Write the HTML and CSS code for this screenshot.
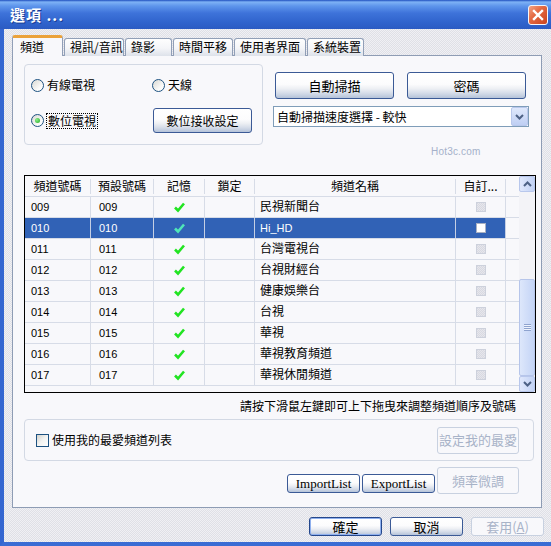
FILE: index.html
```html
<!DOCTYPE html>
<html lang="zh-Hant">
<head>
<meta charset="utf-8">
<title>選項</title>
<link rel="stylesheet" href="styles.css">
</head>
<body>
<div class="window">
  <div class="titlebar">
    <span class="title">選項 ...</span>
    <span class="close"><svg width="12" height="12" viewBox="0 0 12 12"><path d="M2 2 L10 10 M10 2 L2 10" stroke="#fff" stroke-width="2.4" stroke-linecap="square"/></svg></span>
  </div>
  <div class="frame">
    <div class="tabs">
      <div class="tab sel tw1">頻道</div>
      <div class="tab tw2">視訊/音訊</div>
      <div class="tab tw3">錄影</div>
      <div class="tab tw4">時間平移</div>
      <div class="tab tw5">使用者界面</div>
      <div class="tab tw6">系統裝置</div>
    </div>
    <div class="panel">
      <div class="top">
        <div class="group1">
          <div class="opt"><span class="radio"></span><span>有線電視</span></div>
          <div class="opt"><span class="radio"></span><span>天線</span></div>
          <div class="opt"><span class="radio"><span class="dot"></span></span><span class="focus">數位電視</span></div>
          <div class="btn btn-dig">數位接收設定</div>
        </div>
        <div class="right">
          <div class="btnrow">
            <div class="btn btn-big">自動掃描</div>
            <div class="btn btn-big">密碼</div>
          </div>
          <div class="select">
            <span>自動掃描速度選擇 - 較快</span>
            <span class="sel-arrow"><svg width="9" height="6" viewBox="0 0 9 6"><path d="M1 1 L4.5 4.5 L8 1" fill="none" stroke="#4d6185" stroke-width="2"/></svg></span>
          </div>
        </div>
      </div>
      <div class="mark">Hot3c.com</div>
      <div class="list">
        <div class="grid">
          <div class="row head">
            <div>頻道號碼</div><div>預設號碼</div><div>記憶</div><div>鎖定</div><div>頻道名稱</div><div>自訂...</div><div></div>
          </div>
          <div class="row"><div class="c1">009</div><div class="c2">009</div><div class="cc"><svg class="ok" width="11" height="11" viewBox="0 0 11 11"><path d="M1 5.5 L4 8.5 L10 1.5" fill="none" stroke="#22e422" stroke-width="2.6"/></svg></div><div></div><div class="cn">民視新聞台</div><div class="cc"><span class="mini"></span></div><div></div></div>
          <div class="row sel"><div class="c1">010</div><div class="c2">010</div><div class="cc"><svg class="ok" width="11" height="11" viewBox="0 0 11 11"><path d="M1 5.5 L4 8.5 L10 1.5" fill="none" stroke="#4fe6b8" stroke-width="2.6"/></svg></div><div></div><div class="cn">Hi_HD</div><div class="cc"><span class="mini"></span></div><div></div></div>
          <div class="row"><div class="c1">011</div><div class="c2">011</div><div class="cc"><svg class="ok" width="11" height="11" viewBox="0 0 11 11"><path d="M1 5.5 L4 8.5 L10 1.5" fill="none" stroke="#22e422" stroke-width="2.6"/></svg></div><div></div><div class="cn">台灣電視台</div><div class="cc"><span class="mini"></span></div><div></div></div>
          <div class="row"><div class="c1">012</div><div class="c2">012</div><div class="cc"><svg class="ok" width="11" height="11" viewBox="0 0 11 11"><path d="M1 5.5 L4 8.5 L10 1.5" fill="none" stroke="#22e422" stroke-width="2.6"/></svg></div><div></div><div class="cn">台視財經台</div><div class="cc"><span class="mini"></span></div><div></div></div>
          <div class="row"><div class="c1">013</div><div class="c2">013</div><div class="cc"><svg class="ok" width="11" height="11" viewBox="0 0 11 11"><path d="M1 5.5 L4 8.5 L10 1.5" fill="none" stroke="#22e422" stroke-width="2.6"/></svg></div><div></div><div class="cn">健康娛樂台</div><div class="cc"><span class="mini"></span></div><div></div></div>
          <div class="row"><div class="c1">014</div><div class="c2">014</div><div class="cc"><svg class="ok" width="11" height="11" viewBox="0 0 11 11"><path d="M1 5.5 L4 8.5 L10 1.5" fill="none" stroke="#22e422" stroke-width="2.6"/></svg></div><div></div><div class="cn">台視</div><div class="cc"><span class="mini"></span></div><div></div></div>
          <div class="row"><div class="c1">015</div><div class="c2">015</div><div class="cc"><svg class="ok" width="11" height="11" viewBox="0 0 11 11"><path d="M1 5.5 L4 8.5 L10 1.5" fill="none" stroke="#22e422" stroke-width="2.6"/></svg></div><div></div><div class="cn">華視</div><div class="cc"><span class="mini"></span></div><div></div></div>
          <div class="row"><div class="c1">016</div><div class="c2">016</div><div class="cc"><svg class="ok" width="11" height="11" viewBox="0 0 11 11"><path d="M1 5.5 L4 8.5 L10 1.5" fill="none" stroke="#22e422" stroke-width="2.6"/></svg></div><div></div><div class="cn">華視教育頻道</div><div class="cc"><span class="mini"></span></div><div></div></div>
          <div class="row"><div class="c1">017</div><div class="c2">017</div><div class="cc"><svg class="ok" width="11" height="11" viewBox="0 0 11 11"><path d="M1 5.5 L4 8.5 L10 1.5" fill="none" stroke="#22e422" stroke-width="2.6"/></svg></div><div></div><div class="cn">華視休閒頻道</div><div class="cc"><span class="mini"></span></div><div></div></div>
        </div>
        <div class="sb">
          <div class="sb-btn"><svg width="9" height="6" viewBox="0 0 9 6"><path d="M1 5 L4.5 1.5 L8 5" fill="none" stroke="#4d6185" stroke-width="2"/></svg></div>
          <div class="sb-track">
            <div class="sb-thumb"><span class="grip"></span></div>
          </div>
          <div class="sb-btn"><svg width="9" height="6" viewBox="0 0 9 6"><path d="M1 1 L4.5 4.5 L8 1" fill="none" stroke="#4d6185" stroke-width="2"/></svg></div>
        </div>
      </div>
      <div class="hint">請按下滑鼠左鍵即可上下拖曳來調整頻道順序及號碼</div>
      <div class="group2">
        <div class="cklabel"><span class="check"></span><span>使用我的最愛頻道列表</span></div>
        <div class="btn dis btn-fav">設定我的最愛</div>
      </div>
      <div class="bottom">
        <div class="btn btn-list">ImportList</div>
        <div class="btn btn-list">ExportList</div>
        <div class="btn dis btn-tune">頻率微調</div>
      </div>
    </div>
    <div class="footer">
      <div class="btn btn-ft def">確定</div>
      <div class="btn btn-ft">取消</div>
      <div class="btn btn-ft dis">套用(<u>A</u>)</div>
    </div>
  </div>
</div>
</body>
</html>
```

FILE: styles.css
```css
* { box-sizing: border-box; }
html, body { margin: 0; padding: 0; }
body {
  width: 551px;
  height: 546px;
  overflow: hidden;
  font-family: "Noto Sans CJK TC", "Liberation Sans", sans-serif;
  font-size: 12px;
  line-height: 14px;
  color: #000;
  background: #e8e8ed;
}
.window {
  width: 551px;
  height: 546px;
  display: flex;
  flex-direction: column;
}
.titlebar {
  height: 29px;
  flex: none;
  display: flex;
  align-items: center;
  justify-content: space-between;
  padding: 0 3px 0 10px;
  background: linear-gradient(#1f4fbf 0, #7eb2f6 2px, #5e95ec 6px, #3e73da 13px, #3064cd 22px, #2b5bc3 29px);
}
.title {
  color: #fff;
  font-weight: bold;
  font-size: 15px;
  line-height: 18px;
  letter-spacing: 1px;
  text-shadow: 1px 1px 0 #173b92;
}
.close {
  width: 20px;
  height: 20px;
  margin-top: 1px;
  border: 1px solid #f4f6fb;
  border-radius: 3px;
  background: linear-gradient(135deg, #f2a486 0%, #e46a43 40%, #c9431f 100%);
  display: flex;
  align-items: center;
  justify-content: center;
}
.frame {
  flex: 1;
  display: flex;
  flex-direction: column;
  border-left: 4px solid #3466d0;
  border-bottom: 4px solid #3a6cd4;
  background: repeating-conic-gradient(#f0f0f4 0% 25%, #dfe0e6 0% 50%) 0 0 / 2px 2px;
}
/* tabs */
.tabs {
  display: flex;
  align-items: flex-end;
  gap: 1px;
  height: 21px;
  margin: 6px 0 0 8px;
  position: relative;
  z-index: 1;
}
.tab {
  height: 18px;
  padding-left: 5px;
  line-height: 16px;
  white-space: nowrap;
  border: 1px solid #919fb7;
  border-bottom: none;
  border-radius: 3px 3px 0 0;
  background: linear-gradient(#fefefe 0%, #f4f5f8 55%, #dde2ea 100%);
}
.tab.sel {
  height: 21px;
  padding-left: 7px;
  line-height: 18px;
  border-top: 3px solid #eba23a;
  background: #f8f8fb;
}
.tw1 { width: 51px; }
.tw2 { width: 60px; }
.tw3 { width: 47px; }
.tw4 { width: 60px; }
.tw5 { width: 72px; }
.tw6 { width: 57px; }
/* panel */
.panel {
  margin: -1px 0 0 8px;
  width: 530px;
  height: 453px;
  flex: none;
  border: 1px solid #8e9cb4;
  background: #f8f8fb;
  display: flex;
  flex-direction: column;
  padding-left: 11px;
}
.top {
  display: flex;
  margin-top: 8px;
  height: 81px;
}
.group1 {
  width: 239px;
  height: 81px;
  border: 1px solid #d3d9e4;
  border-radius: 4px;
  display: grid;
  grid-template-columns: 121px 1fr;
  grid-template-rows: 26px 25px;
  row-gap: 10px;
  align-items: center;
  padding: 7px 0 0 6px;
}
.opt {
  display: flex;
  align-items: center;
  gap: 3px;
}
.radio {
  width: 13px;
  height: 13px;
  border: 1px solid #1d5281;
  border-radius: 50%;
  background: linear-gradient(135deg, #d8d8d2 0%, #fbfbfa 70%, #fff 100%);
  display: flex;
  align-items: center;
  justify-content: center;
}
.dot {
  width: 5px;
  height: 5px;
  border-radius: 50%;
  background: radial-gradient(circle at 35% 35%, #8af08a, #24a824);
}
.focus {
  outline: 1px dotted #000;
  outline-offset: 0;
  padding: 0 1px;
}
.btn {
  display: flex;
  align-items: center;
  justify-content: center;
  white-space: nowrap;
  border: 1px solid #3b5a96;
  border-radius: 3px;
  background: linear-gradient(#ffffff 0%, #fcfcfd 45%, #eef0f4 62%, #d6dde9 80%, #b5c3d9 100%);
  color: #000;
}
.btn.dis {
  border-color: #c8d1e0;
  background: #f8f8fb;
  color: #a8b3c8;
}
.btn-dig {
  width: 99px;
  height: 25px;
  margin-left: 1px;
}
.right {
  margin-left: 10px;
  width: 256px;
  display: flex;
  flex-direction: column;
}
.btnrow {
  display: flex;
  gap: 13px;
  padding-left: 2px;
  margin-top: 8px;
}
.btn-big {
  width: 119px;
  height: 27px;
  font-size: 13px;
}
.select {
  margin-top: 7px;
  height: 21px;
  border: 1px solid #7f9db9;
  background: #fff;
  display: flex;
  align-items: center;
  justify-content: space-between;
  padding-left: 3px;
}
.sel-arrow {
  width: 17px;
  height: 19px;
  border: 1px solid #b9c8ec;
  border-radius: 2px;
  background: linear-gradient(#dfe8fc, #bfcff3);
  display: flex;
  align-items: center;
  justify-content: center;
}
.mark {
  height: 30px;
  padding: 1px 0 0 407px;
  font-family: "Liberation Sans", sans-serif;
  font-size: 10px;
  line-height: 12px;
  color: #a5b1ca;
  letter-spacing: 0.2px;
}
/* list */
.list {
  width: 512px;
  height: 218px;
  flex: none;
  border: 1px solid #000;
  background: #f8f8fb;
  display: flex;
}
.grid {
  width: 494px;
}
.row {
  display: grid;
  grid-template-columns: 66px 63px 51px 50px 201px 50px 13px;
  height: 21px;
  border-bottom: 1px solid #d7dce7;
}
.row > div {
  display: flex;
  align-items: center;
  border-right: 1px solid #d7dce7;
  white-space: nowrap;
  overflow: hidden;
}
.row > div:last-child { border-right: none; }
.head > div {
  height: 15px;
  align-self: center;
  justify-content: center;
}
.c1, .c2, .cn {
  font-family: "Liberation Sans", "Noto Sans CJK TC", sans-serif;
}
.c1, .c2 { font-size: 11px; }
.c1 { padding-left: 6px; }
.c2 { padding-left: 8px; }
.cn { padding-left: 5px; }
.cc { justify-content: center; }
.row.sel > div:not(:last-child) {
  background: #3162b6;
  color: #fff;
  border-right-color: #c5cfe4;
}
.row.sel .cn { font-size: 11px; }
.mini {
  width: 10px;
  height: 10px;
  border: 1px solid #cdd1dc;
  background: repeating-conic-gradient(#e6e6ec 0% 25%, #d8d9e1 0% 50%) 0 0 / 2px 2px;
}
.row.sel .mini {
  border-color: #a8b0c2;
  background: #fff;
}
.sb {
  width: 16px;
  display: flex;
  flex-direction: column;
  background: #f3f3f7;
}
.sb-btn {
  height: 16px;
  flex: none;
  border: 1px solid #b8c7ec;
  border-radius: 2px;
  background: linear-gradient(90deg, #e0e8fc, #c2d2f5);
  display: flex;
  align-items: center;
  justify-content: center;
}
.sb-track {
  flex: 1;
  display: flex;
  flex-direction: column;
  justify-content: flex-end;
}
.sb-thumb {
  height: 97px;
  border: 1px solid #b6c5ea;
  border-radius: 2px;
  background: linear-gradient(90deg, #dde7fb, #c4d4f6);
  display: flex;
  align-items: center;
  justify-content: center;
}
.grip {
  width: 7px;
  height: 7px;
  background: repeating-linear-gradient(#8ea3cf 0 1px, #eef3fd 1px 2px);
}
.hint {
  height: 26px;
  flex: none;
  padding: 6px 25px 0 0;
  text-align: right;
}
.group2 {
  width: 510px;
  height: 42px;
  flex: none;
  border: 1px solid #d3d9e4;
  border-radius: 4px;
  display: flex;
  align-items: center;
  justify-content: space-between;
  padding: 0 14px 0 11px;
}
.cklabel {
  display: flex;
  align-items: center;
  gap: 3px;
}
.check {
  width: 13px;
  height: 13px;
  border: 1px solid #1d5281;
  background: linear-gradient(135deg, #d2d2cc 0%, #f4f4f2 50%, #fff 100%);
}
.btn-fav {
  width: 82px;
  height: 27px;
  font-size: 13px;
}
.bottom {
  margin-top: 6px;
  display: flex;
  justify-content: flex-end;
  align-items: flex-end;
  gap: 2px;
  padding-right: 22px;
}
.btn-list {
  width: 73px;
  height: 19px;
  margin-bottom: 1px;
  font-family: "Liberation Serif", serif;
  font-size: 13px;
}
.btn-tune {
  width: 82px;
  height: 27px;
  font-size: 13px;
}
.footer {
  flex: 1;
  display: flex;
  justify-content: flex-end;
  align-items: flex-start;
  gap: 8px;
  padding: 9px 7px 0 0;
}
.btn-ft {
  width: 73px;
  height: 19px;
  font-size: 13px;
}
.btn-ft.def {
  border-color: #24478c;
  box-shadow: inset 0 0 0 1px #8fb0ee;
}
.btn-ft.dis { border-color: #c8d1e0; }
```
